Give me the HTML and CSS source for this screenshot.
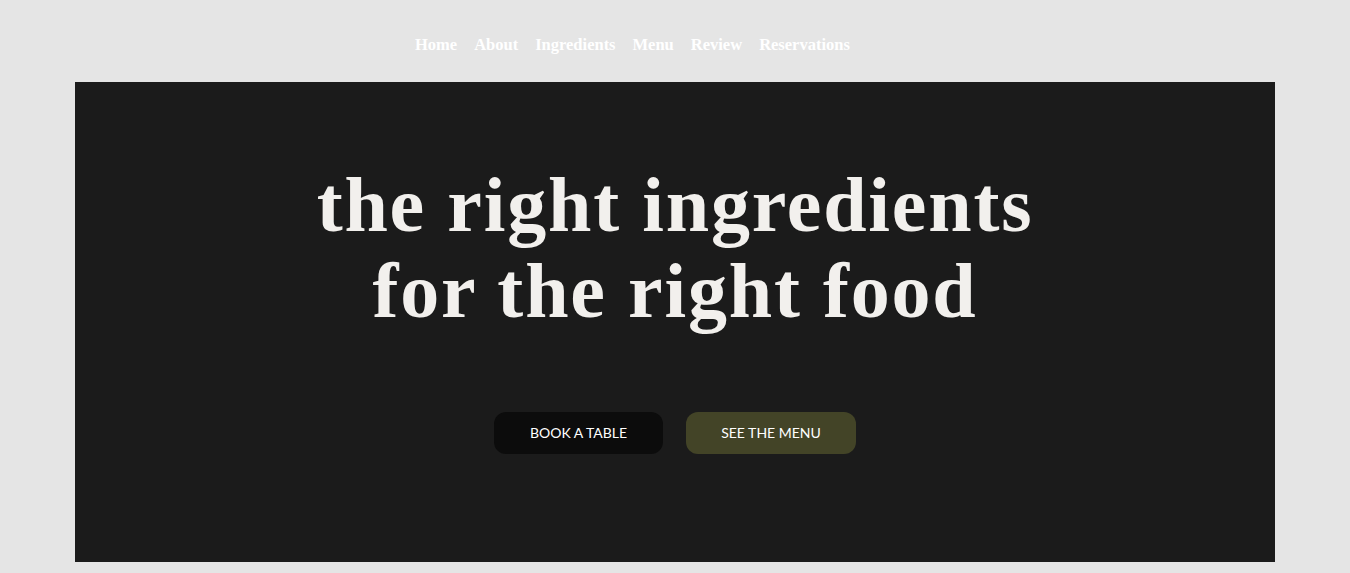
FILE: index.html
```html
<!DOCTYPE html>
<html>
    <head>
        <title>Restaurant</title>
        <link rel="stylesheet" href="styles.css">
    </head>
    <body>
        <div class="nav">
            <a href="#">Home</a>
            <a href="#">About</a>
            <a href="#">Ingredients</a>
            <a href="#">Menu</a>
            <a href="#">Review</a>
            <a href="#">Reservations</a>
        </div>
        <div class="hero">
            <h1 class="hero_title">the right ingredients<br>for the right food</h1>
            <div class="hero_btns">
                <a class="btn btn_dark" href="#">BOOK A TABLE</a>
                <a class="btn btn_olive" href="#">SEE THE MENU</a>
            </div>
        </div>
    </body>
</html>
```

FILE: styles.css
```css
body{
    margin: 0;
    background-color: #e5e5e5;
    font-family: "Liberation Serif", serif;
}
.nav{
    display: flex;
    gap: 17px;
    padding: 35px 0 0 415px;
    height: 48px;
    box-sizing: border-box;
}
.nav a{
    color: #fff;
    text-decoration: none;
    font-weight: bold;
    font-size: 16.5px;
    line-height: 20px;
}
.hero{
    width: 1200px;
    height: 480px;
    margin: 34px 0 0 75px;
    background-color: #1b1b1b;
    display: flex;
    flex-direction: column;
    align-items: center;
    padding-top: 80px;
    box-sizing: border-box;
}
.hero_title{
    margin: 0;
    color: #f2f0ed;
    font-size: 78px;
    line-height: 86px;
    letter-spacing: 1.8px;
    font-weight: bold;
    text-align: center;
}
.hero_btns{
    display: flex;
    gap: 23px;
    margin-top: 78px;
}
.btn{
    display: flex;
    align-items: center;
    justify-content: center;
    height: 42px;
    border-radius: 12px;
    color: #fff;
    text-decoration: none;
    font-family: Lato, sans-serif;
    font-size: 14px;
    padding-bottom: 1px;
    box-sizing: border-box;
}
.btn_dark{
    width: 169px;
    background-color: #0c0c0c;
}
.btn_olive{
    width: 170px;
    background-color: #434427;
}
```
